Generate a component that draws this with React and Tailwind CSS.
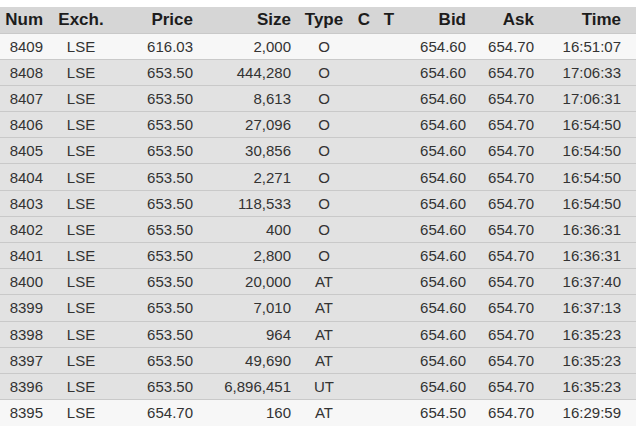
const columns = [
    { label: "Num", width: 48, align: "text-right pr-[5px]" },
    { label: "Exch.", width: 66, align: "text-center" },
    { label: "Price", width: 84, align: "text-right pr-[5px]" },
    { label: "Size", width: 98, align: "text-right pr-[5px]" },
    { label: "Type", width: 56, align: "text-center" },
    { label: "C", width: 24, align: "text-center" },
    { label: "T", width: 26, align: "text-center" },
    { label: "Bid", width: 69, align: "text-right pr-[5px]" },
    { label: "Ask", width: 68, align: "text-right pr-[5px]" },
    { label: "Time", width: 97, align: "text-right pr-[15px]" },
];

const trades = [
    ["8409", "LSE", "616.03", "2,000", "O", "", "", "654.60", "654.70", "16:51:07", true],
    ["8408", "LSE", "653.50", "444,280", "O", "", "", "654.60", "654.70", "17:06:33"],
    ["8407", "LSE", "653.50", "8,613", "O", "", "", "654.60", "654.70", "17:06:31"],
    ["8406", "LSE", "653.50", "27,096", "O", "", "", "654.60", "654.70", "16:54:50"],
    ["8405", "LSE", "653.50", "30,856", "O", "", "", "654.60", "654.70", "16:54:50"],
    ["8404", "LSE", "653.50", "2,271", "O", "", "", "654.60", "654.70", "16:54:50"],
    ["8403", "LSE", "653.50", "118,533", "O", "", "", "654.60", "654.70", "16:54:50"],
    ["8402", "LSE", "653.50", "400", "O", "", "", "654.60", "654.70", "16:36:31"],
    ["8401", "LSE", "653.50", "2,800", "O", "", "", "654.60", "654.70", "16:36:31"],
    ["8400", "LSE", "653.50", "20,000", "AT", "", "", "654.60", "654.70", "16:37:40"],
    ["8399", "LSE", "653.50", "7,010", "AT", "", "", "654.60", "654.70", "16:37:13"],
    ["8398", "LSE", "653.50", "964", "AT", "", "", "654.60", "654.70", "16:35:23"],
    ["8397", "LSE", "653.50", "49,690", "AT", "", "", "654.60", "654.70", "16:35:23"],
    ["8396", "LSE", "653.50", "6,896,451", "UT", "", "", "654.60", "654.70", "16:35:23"],
    ["8395", "LSE", "654.70", "160", "AT", "", "", "654.50", "654.70", "16:29:59", true],
];

export default function App() {
    return (
        <div className="w-[636px] h-[426px] overflow-hidden bg-white pt-[7px] font-['Liberation_Sans',Arial,sans-serif]">
            <table className="w-full table-fixed border-collapse">
                <colgroup>
                    {columns.map((c) => (
                        <col key={c.label} style={{ width: c.width }} />
                    ))}
                </colgroup>
                {/* Header */}
                <thead>
                    <tr className="bg-[#d6d6d6] h-[26px]">
                        {columns.map((c) => (
                            <th key={c.label} className={`p-0 text-[17px] font-bold text-[#1c1c1c] leading-none ${c.align}`}>
                                {c.label}
                            </th>
                        ))}
                    </tr>
                </thead>
                {/* Trades */}
                <tbody>
                    {trades.map((row) => (
                        <tr
                            key={row[0]}
                            className={`h-[26.2px] border-t border-[#c9c9c9] ${row[10] ? "bg-[#f7f7f7]" : "bg-[#e2e2e2]"}`}
                        >
                            {columns.map((c, i) => (
                                <td key={c.label} className={`p-0 text-[15px] text-[#333] leading-none ${c.align}`}>
                                    {row[i]}
                                </td>
                            ))}
                        </tr>
                    ))}
                </tbody>
            </table>
        </div>
    );
}
